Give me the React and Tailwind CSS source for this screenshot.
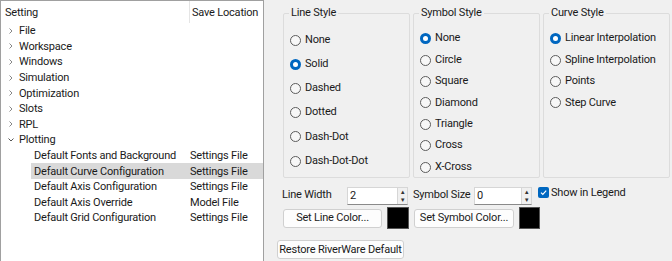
import React from "react";

const treeRows = [
  { label: "File", depth: 0, arrow: "closed" },
  { label: "Workspace", depth: 0, arrow: "closed" },
  { label: "Windows", depth: 0, arrow: "closed" },
  { label: "Simulation", depth: 0, arrow: "closed" },
  { label: "Optimization", depth: 0, arrow: "closed" },
  { label: "Slots", depth: 0, arrow: "closed" },
  { label: "RPL", depth: 0, arrow: "closed" },
  { label: "Plotting", depth: 0, arrow: "open" },
  { label: "Default Fonts and Background", depth: 1, loc: "Settings File" },
  { label: "Default Curve Configuration", depth: 1, loc: "Settings File", selected: true },
  { label: "Default Axis Configuration", depth: 1, loc: "Settings File" },
  { label: "Default Axis Override", depth: 1, loc: "Model File" },
  { label: "Default Grid Configuration", depth: 1, loc: "Settings File" },
];

const Radio = ({ checked }) =>
  checked ? (
    <span className="w-[11px] h-[11px] rounded-full bg-[#0067c0] flex items-center justify-center shrink-0">
      <span className="w-[5px] h-[5px] rounded-full bg-white" />
    </span>
  ) : (
    <span className="w-[11px] h-[11px] rounded-full border border-[#5c5c5c] bg-[#f7f7f7] shrink-0" />
  );

const Group = ({ title, items, selected, rowH, pad }) => (
  <fieldset className="border border-[#dcdcdc] rounded-[2px] h-[172px] px-[6px] min-w-0 w-[127px]">
    <legend className="px-[2px] ml-[-1px] leading-[14px]">{title}</legend>
    <div className={`flex flex-col ${pad}`}>
      {items.map((it) => (
        <div key={it} className={`flex items-center gap-[4px] ${rowH}`}>
          <Radio checked={it === selected} />
          <span className="whitespace-nowrap">{it}</span>
        </div>
      ))}
    </div>
  </fieldset>
);

const Spin = ({ value, w }) => (
  <div className={`flex h-[18px] bg-white border border-[#d6d6d6] border-b-[#8a8a8a] shrink-0 ${w}`}>
    <span className="flex-1 pl-[2px] leading-[16px]">{value}</span>
    <div className="w-[10px] flex flex-col bg-[#f0f0f0] border-l border-[#d6d6d6] text-[6px] leading-[8px] text-[#333] items-center">
      <span>▲</span>
      <span>▼</span>
    </div>
  </div>
);

const Btn = ({ children, w }) => (
  <button className={`h-[19px] bg-[#fdfdfd] border border-[#d0d0d0] rounded-[3px] text-center leading-[16px] whitespace-nowrap shrink-0 ${w}`}>
    {children}
  </button>
);

export default function App() {
  return (
    <div
      className="w-[672px] h-[261px] bg-[#f0f0f0] flex text-[11px] tracking-[-0.2px] text-[#1a1a1a] overflow-hidden"
      style={{ fontFamily: 'Roboto, "Noto Sans", sans-serif' }}
    >
      {/* Tree panel */}
      <div className="w-[264px] h-full bg-white border border-[#a0a0a0] border-b-0 shrink-0 flex flex-col">
        <div className="flex h-[22px] items-center whitespace-nowrap">
          <div className="w-[188px] pl-[4px] pt-[2px]">Setting</div>
          <div className="border-l border-[#e5e5e5] h-full flex items-center pl-[2px] pt-[2px]">Save Location</div>
        </div>
        <div className="flex flex-col">
          {treeRows.map((r) => (
            <div
              key={r.label}
              className={`flex items-center h-[15.6px] leading-[15px] whitespace-nowrap ${r.selected ? "bg-[#d9d9d9] ml-[30px]" : ""}`}
            >
              {r.depth === 0 ? (
                <>
                  <span className="w-[18px] pl-[6px] flex items-center">
                    {r.arrow === "open" ? (
                      <svg width="8" height="8" viewBox="0 0 8 8">
                        <path d="M1.5 2.5 L4 5 L6.5 2.5" fill="none" stroke="#555" strokeWidth="1" />
                      </svg>
                    ) : (
                      <svg width="8" height="8" viewBox="0 0 8 8">
                        <path d="M2.5 1.5 L5 4 L2.5 6.5" fill="none" stroke="#888" strokeWidth="1" />
                      </svg>
                    )}
                  </span>
                  <span>{r.label}</span>
                </>
              ) : (
                <>
                  <span className={`${r.selected ? "w-[159px] pl-[3px]" : "w-[189px] pl-[33px]"} shrink-0`}>
                    {r.label}
                  </span>
                  <span>{r.loc}</span>
                </>
              )}
            </div>
          ))}
        </div>
      </div>

      {/* Right panel */}
      <div className="flex-1 flex flex-col pl-[13px] pt-[6px]">
        <div className="flex gap-[3px] pl-[6px]">
          <Group
            title="Line Style"
            items={["None", "Solid", "Dashed", "Dotted", "Dash-Dot", "Dash-Dot-Dot"]}
            selected="Solid"
            rowH="h-[24.2px]"
            pad="pt-[8px]"
          />
          <Group
            title="Symbol Style"
            items={["None", "Circle", "Square", "Diamond", "Triangle", "Cross", "X-Cross"]}
            selected="None"
            rowH="h-[21.4px]"
            pad="pt-[8px]"
          />
          <Group
            title="Curve Style"
            items={["Linear Interpolation", "Spline Interpolation", "Points", "Step Curve"]}
            selected="Linear Interpolation"
            rowH="h-[21.4px]"
            pad="pt-[8px]"
          />
        </div>

        <div className="flex items-center mt-[8px] pl-[5px] h-[19px] whitespace-nowrap">
          <span className="w-[65px]">Line Width</span>
          <Spin value="2" w="w-[61px]" />
          <span className="w-[66px] pl-[5px]">Symbol Size</span>
          <Spin value="0" w="w-[58px]" />
          <span className="ml-[6px] w-[11px] h-[11px] rounded-[2px] bg-[#0067c0] flex items-center justify-center self-start mt-[1px]">
            <svg width="9" height="9" viewBox="0 0 9 9">
              <path d="M2 4.6 L3.8 6.4 L7.2 2.6" fill="none" stroke="white" strokeWidth="1.2" />
            </svg>
          </span>
          <span className="ml-[2px] self-start leading-[13px]">Show in Legend</span>
        </div>

        <div className="flex items-center mt-[2px] pl-[6px] h-[22px]">
          <Btn w="w-[99px]">Set Line Color...</Btn>
          <span className="ml-[5px] w-[22px] h-[22px] bg-black border border-[#555]" />
          <Btn w="w-[100px] ml-[5px]">Set Symbol Color...</Btn>
          <span className="ml-[5px] w-[21px] h-[22px] bg-black border border-[#555]" />
        </div>

        <div className="mt-[11px]">
          <Btn w="w-[127px]">Restore RiverWare Default</Btn>
        </div>
      </div>
    </div>
  );
}
